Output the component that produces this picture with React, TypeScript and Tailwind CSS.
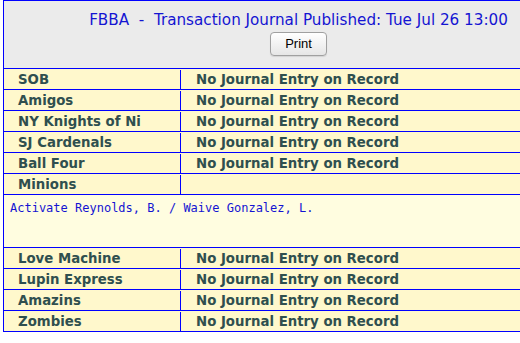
const teams: { name: string; entry?: string; detail?: string }[] = [
  { name: 'SOB', entry: 'No Journal Entry on Record' },
  { name: 'Amigos', entry: 'No Journal Entry on Record' },
  { name: 'NY Knights of Ni', entry: 'No Journal Entry on Record' },
  { name: 'SJ Cardenals', entry: 'No Journal Entry on Record' },
  { name: 'Ball Four', entry: 'No Journal Entry on Record' },
  { name: 'Minions', detail: 'Activate Reynolds, B. / Waive Gonzalez, L.' },
  { name: 'Love Machine', entry: 'No Journal Entry on Record' },
  { name: 'Lupin Express', entry: 'No Journal Entry on Record' },
  { name: 'Amazins', entry: 'No Journal Entry on Record' },
  { name: 'Zombies', entry: 'No Journal Entry on Record' },
];

function TeamRow({ name, entry }: { name: string; entry?: string }) {
  return (
    <div className="flex h-[21px] border-b border-[#0000ff] bg-[#fff8cc] pt-[1px] text-[13.3px] font-bold leading-[19px] text-[#2f4f4f]">
      <div className="w-[177px] shrink-0 border-r border-[#0000ff] pl-[14px]">{name}</div>
      <div className="flex-1 pl-[15px]">{entry}</div>
    </div>
  );
}

export default function App() {
  return (
    <div className="h-[343px] w-[520px] overflow-hidden bg-white font-['DejaVu_Sans',Verdana,sans-serif]">
      <div className="ml-[3px] w-[591px] border-x border-t border-[#0000ff]">
        {/* Header */}
        <div className="flex h-[68px] flex-col items-center border-b border-[#0000ff] bg-[#ebebeb] pt-[10px]">
          <div className="whitespace-pre text-[15.2px] leading-[19px] text-[#1414d2]">
            FBBA  -  Transaction Journal Published: Tue Jul 26 13:00
          </div>
          <button className="mt-[2px] h-[24px] w-[57px] rounded-[4px] border border-[#a0a0a0] bg-gradient-to-b from-white to-[#e6e6e6] font-['Liberation_Sans',Arial,sans-serif] text-[13px] text-black shadow-[0_1px_1px_rgba(0,0,0,0.1)]">
            Print
          </button>
        </div>

        {teams.map((t) =>
          t.detail ? (
            <div key={t.name}>
              <TeamRow name={t.name} />
              <div className="h-[53px] border-b border-[#0000ff] bg-[#fffde0] pl-[6px] pt-[6px] font-['DejaVu_Sans_Mono',monospace] text-[12px] leading-[15px] text-[#1414d2]">
                {t.detail}
              </div>
            </div>
          ) : (
            <TeamRow key={t.name} name={t.name} entry={t.entry} />
          )
        )}
      </div>
    </div>
  );
}
